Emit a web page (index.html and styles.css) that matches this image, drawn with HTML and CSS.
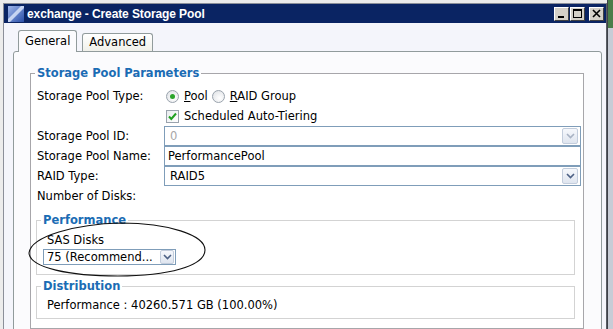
FILE: index.html
```html
<!DOCTYPE html>
<html lang="en">
<head>
    <meta charset="UTF-8">
    <title>exchange - Create Storage Pool</title>
    <link rel="stylesheet" href="styles.css">
</head>
<body>
    <div class="screen">
        <div class="window">
            <div class="titlebar">
                <svg class="app-icon" width="16" height="16" viewBox="0 0 16 16">
                    <defs>
                        <linearGradient id="ig" x1="0" y1="0" x2="1" y2="1">
                            <stop offset="0" stop-color="#9fb6ea"/>
                            <stop offset="1" stop-color="#2a4fa8"/>
                        </linearGradient>
                    </defs>
                    <rect x="0" y="0" width="16" height="16" fill="url(#ig)"/>
                    <polygon points="0,13 13,0 16,0 16,2 2,16 0,16" fill="#dfe8fb" opacity="0.8"/>
                </svg>
                <span class="title">exchange - Create Storage Pool</span>
                <div class="controls">
                    <span class="ctl"><svg width="13" height="12" viewBox="0 0 13 12"><rect x="3" y="8" width="6" height="2" fill="#000"/></svg></span>
                    <span class="ctl"><svg width="13" height="12" viewBox="0 0 13 12"><rect x="2.5" y="1.5" width="8" height="8" fill="none" stroke="#000"/><rect x="2" y="1" width="9" height="2" fill="#000"/></svg></span>
                    <span class="ctl close"><svg width="13" height="12" viewBox="0 0 13 12"><path d="M3 2 L10 9 M10 2 L3 9" stroke="#000" stroke-width="1.6"/></svg></span>
                </div>
            </div>
            <div class="client">
                <div class="tabs">
                    <div class="tab active">General</div>
                    <div class="tab">Advanced</div>
                </div>
                <div class="panel">
                    <fieldset class="group main">
                        <legend>Storage Pool Parameters</legend>
                        <div class="row">
                            <span class="label">Storage Pool Type:</span>
                            <div class="choices">
                                <span class="radio on"></span>
                                <span class="opt"><u>P</u>ool</span>
                                <span class="radio"></span>
                                <span class="opt"><u>R</u>AID Group</span>
                            </div>
                        </div>
                        <div class="row">
                            <span class="label"></span>
                            <div class="choices">
                                <span class="check">
                                    <svg width="11" height="11" viewBox="0 0 11 11"><path d="M2 5.5 L4.3 8 L9 2.5" fill="none" stroke="#21a121" stroke-width="2"/></svg>
                                </span>
                                <span class="opt">Scheduled Auto-Tiering</span>
                            </div>
                        </div>
                        <div class="row">
                            <span class="label">Storage Pool ID:</span>
                            <div class="box combo disabled">
                                <span class="value">0</span>
                                <span class="drop"><svg width="9" height="6" viewBox="0 0 9 6"><path d="M1 1 L4.5 4.5 L8 1" fill="none" stroke="#a9b3c4" stroke-width="1.6"/></svg></span>
                            </div>
                        </div>
                        <div class="row">
                            <span class="label">Storage Pool Name:</span>
                            <div class="box text">
                                <span class="value">PerformancePool</span>
                            </div>
                        </div>
                        <div class="row">
                            <span class="label">RAID Type:</span>
                            <div class="box combo">
                                <span class="value">RAID5</span>
                                <span class="drop"><svg width="9" height="6" viewBox="0 0 9 6"><path d="M1 1 L4.5 4.5 L8 1" fill="none" stroke="#4d6185" stroke-width="1.6"/></svg></span>
                            </div>
                        </div>
                        <div class="row">
                            <span class="label">Number of Disks:</span>
                        </div>

                        <fieldset class="group sub perf">
                            <legend>Performance</legend>
                            <div class="caption">SAS Disks</div>
                            <div class="box combo small">
                                <span class="value">75 (Recommend...</span>
                                <span class="drop"><svg width="9" height="6" viewBox="0 0 9 6"><path d="M1 1 L4.5 4.5 L8 1" fill="none" stroke="#4d6185" stroke-width="1.6"/></svg></span>
                            </div>
                        </fieldset>

                        <fieldset class="group sub dist">
                            <legend>Distribution</legend>
                            <div class="caption">Performance : 40260.571 GB (100.00%)</div>
                        </fieldset>
                    </fieldset>
                </div>
            </div>
        </div>
        <div class="desk-edge"></div>
    </div>

    <svg class="annotation" width="613" height="329" viewBox="0 0 613 329">
        <path d="M29 253 C31 236 76 224 121 223 C168 223 205 235 205 250 C205 266 168 276 118 276 C70 276 30 268 29 253 Z" fill="none" stroke="#111" stroke-width="1.1"/>
    </svg>
</body>
</html>
```

FILE: styles.css
```css
html, body { margin: 0; padding: 0; }
body { width: 613px; height: 329px; overflow: hidden; background: #ececec; font-family: "DejaVu Sans", Verdana, sans-serif; font-size: 11.5px; color: #000; position: relative; }

.screen { display: flex; height: 329px; }
.window { margin: 3px 0 0 3px; width: 604px; height: 326px; overflow: hidden; box-sizing: border-box; border: 1px solid #8b8f99; border-right-color: #5a5e66; border-bottom: none; background: #f4f5fb; }
.desk-edge { width: 6px; background: linear-gradient(#4b7d49 0 28px, #c7ccd6 28px); border-left: 1px solid #3e4148; box-sizing: border-box; }

/* title bar */
.titlebar { height: 19px; background: #0a2463; display: flex; align-items: center; padding: 0 2px 0 4px; }
.app-icon { display: block; flex: none; }
.title { margin-left: 3px; color: #fff; font-family: "Liberation Sans", Arial, sans-serif; font-weight: bold; font-size: 12px; letter-spacing: -0.1px; white-space: nowrap; }
.controls { margin-left: auto; display: flex; gap: 1px; }
.ctl { width: 15px; height: 14px; box-sizing: border-box; background: #d4d0c8; border: 1px solid; border-color: #fff #404040 #404040 #fff; display: flex; align-items: center; justify-content: center; }
.ctl svg { display: block; }
.ctl.close { margin-left: 3px; }

/* tabs */
.client { padding-top: 6px; }
.tabs { display: flex; align-items: flex-end; gap: 5px; margin-left: 14px; height: 22px; position: relative; z-index: 1; }
.tab { box-sizing: border-box; height: 18px; line-height: 17px; padding: 0 6px; border: 1px solid #919b9c; border-bottom: none; border-radius: 3px 3px 0 0; background: linear-gradient(#ffffff, #f0f0ea); white-space: nowrap; }
.tab.active { height: 22px; line-height: 21px; margin-bottom: -1px; background: #fbfbfd; padding-bottom: 1px; }

.panel { margin: 0 4px 0 9px; border: 1px solid #919b9c; border-radius: 3px 3px 0 0; background: #fbfbfd; padding: 14px 17px 30px 16px; }

/* group boxes */
.group { margin: 0; border: 1px solid #d3d3d3; background: #fff; min-width: 0; }
.group legend { font-weight: bold; color: #1b6cb4; line-height: 14px; padding: 0 2px; margin-left: -2px; }
.main { border-color: #a7a6aa; padding: 6px 2px 9px 6px; }
.sub { padding: 6px 0 9px 6px; margin: 7px 6px 0 -1px; }
.dist { margin-top: 4px; padding-top: 5px; padding-bottom: 6px; }

.row { display: flex; align-items: center; height: 20px; }
.label { width: 127px; flex: none; white-space: nowrap; }
.choices { display: flex; align-items: center; margin-left: 2px; }
.opt { margin: 0 4px 0 5px; white-space: nowrap; }
.opt u { text-decoration: underline; }

.radio { width: 13px; height: 13px; box-sizing: border-box; border-radius: 50%; border: 1px solid #9aa3ad; background: radial-gradient(circle at 60% 65%, #ffffff, #dcdfe3); position: relative; flex: none; }
.radio.on::after { content: ""; position: absolute; left: 3px; top: 3px; width: 5px; height: 5px; border-radius: 50%; background: #2ba42b; }

.check { width: 13px; height: 13px; box-sizing: border-box; border: 1px solid #9aa3ad; background: linear-gradient(135deg, #e9ecef, #ffffff); display: flex; align-items: center; justify-content: center; flex: none; }
.check svg { display: block; }

.box { flex: 1; height: 20px; box-sizing: border-box; border: 1px solid #7f9db9; background: #fff; display: flex; align-items: center; }
.box .value { padding-left: 3px; white-space: nowrap; overflow: hidden; flex: 1; }
.combo .value { padding-left: 5px; }
.disabled .value { color: #a7a7a7; }
.drop { width: 16px; height: 16px; box-sizing: border-box; margin-right: 2px; border: 1px solid #c3cddc; border-radius: 2px; background: linear-gradient(#f6f8fc, #dfe5ef); display: flex; align-items: center; justify-content: center; flex: none; }
.drop svg { display: block; }

.caption { margin-left: 4px; line-height: 14px; white-space: nowrap; }
.combo.small { width: 133px; flex: none; height: 16px; margin-top: 2px; }
.small .value { padding-left: 3px; }
.small .drop { width: 14px; height: 14px; margin-right: 1px; }

.annotation { position: absolute; left: 0; top: 0; pointer-events: none; }
```
